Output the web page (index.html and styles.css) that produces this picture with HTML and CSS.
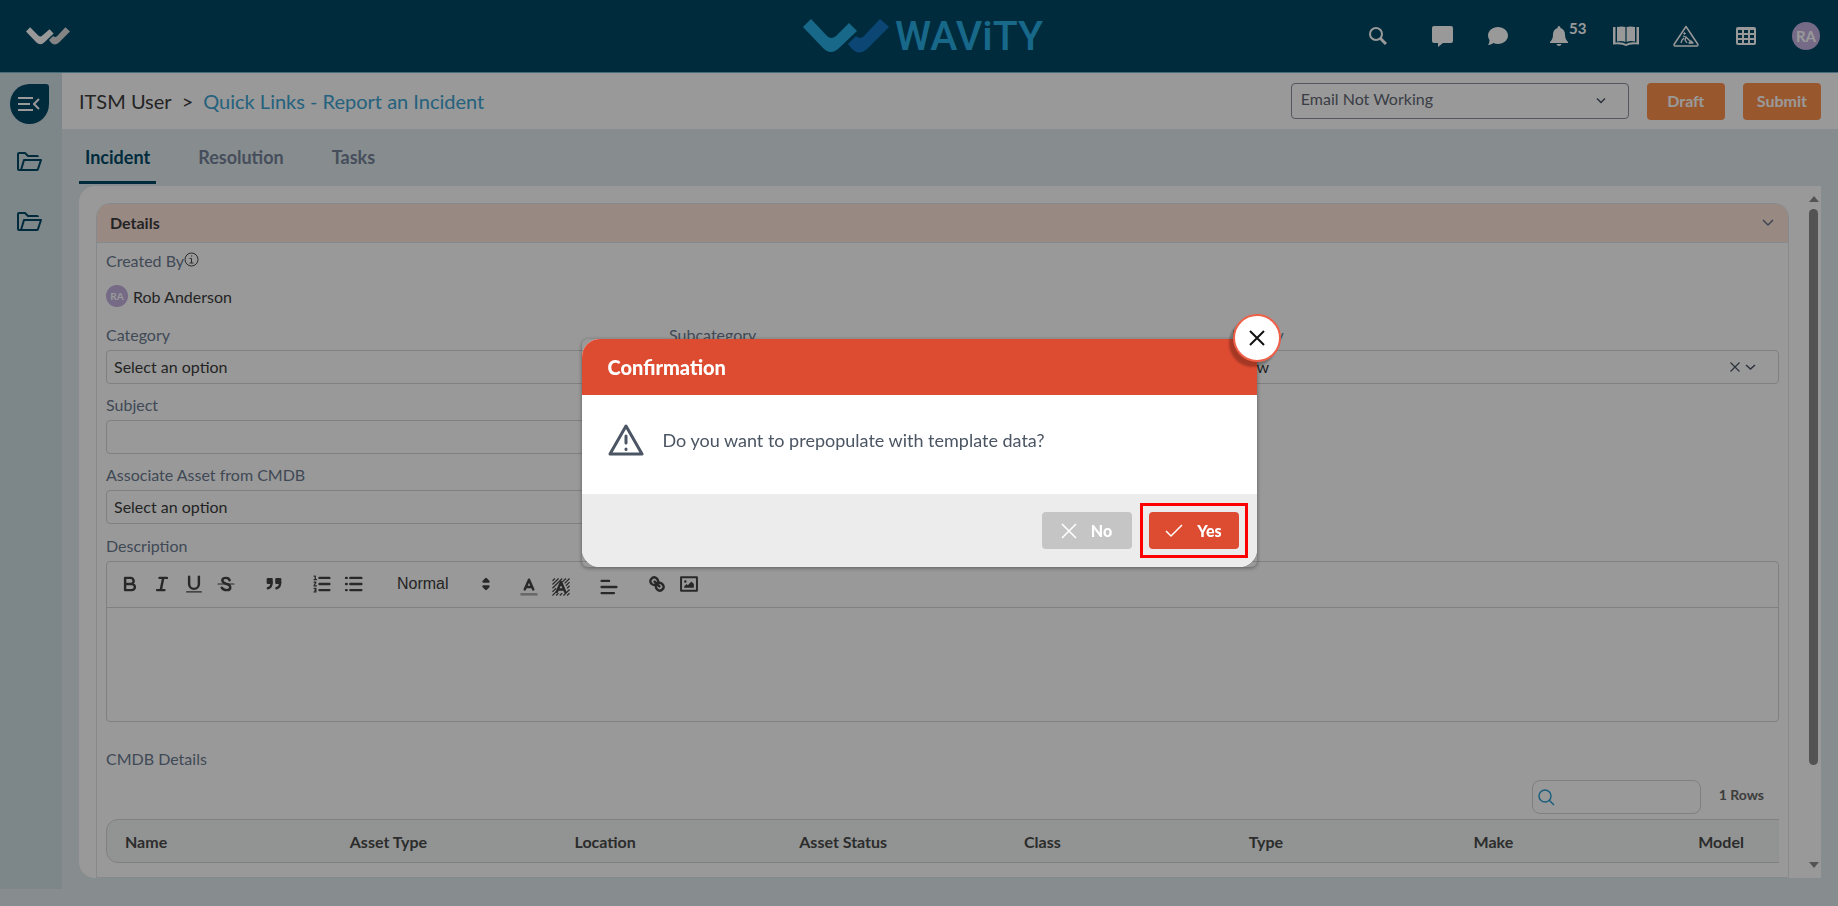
FILE: index.html
```html
<!DOCTYPE html>
<html lang="en">
<head>
    <meta charset="UTF-8">
    <meta name="viewport" content="width=device-width, initial-scale=1.0">
    <title>Wavity - Report an Incident</title>
    <link rel="stylesheet" href="styles.css">
</head>
<body>

    <header class="topbar">
        <a href="#" class="home" aria-label="Home">
            <svg width="44" height="18" viewBox="0 0 86 34">
                <path fill="#fff" d="M0 8L8 0L24 16Q28 20 32 16L46 4L54 12L36 29Q28 37 20 29Z"/>
                <path fill="#ddd" d="M45 25L53 17Q57 21 61 17L77 0L86 8L64 30Q56 37 49 30Z"/>
            </svg>
        </a>
        <div class="brand">
            <svg width="86" height="34" viewBox="0 0 86 34">
                <path fill="#28afe4" d="M0 8L8 0L24 17Q28 21 33 17L46 4L54 12L36 29Q28 37 20 29Z"/>
                <path fill="#1376c3" d="M45 25L53 17Q57 21 61 17L77 0L86 8L64 30Q56 37 49 30Z"/>
            </svg>
            <span>WAViTY</span>
        </div>
        <nav class="tools">
            <button class="tool tool-search" aria-label="Search">
                <svg width="18" height="18" viewBox="0 0 18 18" fill="none" stroke="#fff" stroke-width="2"><circle cx="7" cy="7" r="6"/><path d="M11 11L17 17" stroke-width="3"/></svg>
            </button>
            <div class="chats">
                <button class="tool" aria-label="Messages">
                    <svg width="21" height="21" viewBox="0 0 21 21" fill="#fff"><path d="M2 0H19Q21 0 21 2V15Q21 17 19 17H11L6 21V17H2Q0 17 0 15V2Q0 0 2 0Z"/></svg>
                </button>
                <button class="tool" aria-label="Chat">
                    <svg width="20" height="18" viewBox="0 0 20 18" fill="#fff"><path d="M10 0C15.500 0 20 4 20 8.500S15.500 17 10 17Q7.500 17 5.500 16Q3 18 0 18Q1.500 16 1.500 13Q0 11 0 8.500C0 4 4.500 0 10 0Z"/></svg>
                </button>
            </div>
            <button class="tool tool-bell" aria-label="Notifications">
                <svg width="18" height="20" viewBox="0 0 18 20" fill="#fff"><path d="M9 0Q10.500 0 10.500 2Q15 3.500 15 8.500Q15 13 18 16V17H0V16Q3 13 3 8.500Q3 3.500 7.500 2Q7.500 0 9 0ZM6.500 18H11.500Q11 20 9 20T6.500 18Z"/></svg>
                <span class="count">53</span>
            </button>
            <button class="tool" aria-label="Knowledge base">
                <svg width="26" height="20" viewBox="0 0 26 20" fill="#fff"><path d="M4 1Q9 0 12.400 1V16Q9 14.500 4 15.500ZM22 1Q17 0 13.600 1V16Q17 14.500 22 15.500Z"/><path d="M0 1H2.500V16.500Q9 15.500 13 18Q17 15.500 23.500 16.500V1H26V18.500Q17 17.500 13 20Q9 17.500 0 18.500Z"/></svg>
            </button>
            <button class="tool" aria-label="Incidents">
                <svg width="26" height="22" viewBox="0 0 26 22" fill="none" stroke="#fff" stroke-linejoin="round"><path stroke-width="1.500" d="M13 1.500L25 19.500Q25 21 24 21H2Q1 21 1 19.500Z"/><circle cx="11.500" cy="8.500" r=".8" fill="#fff"/><path d="M10 11L13 12L12 15L14 18M11 13L9 15L8 18M13 12L15 14L18 17M16 18L18 16L20 18Z" stroke-width="1.300"/></svg>
            </button>
            <button class="tool" aria-label="Apps">
                <svg width="20" height="18" viewBox="0 0 20 18"><rect width="20" height="18" rx="2" fill="#fff"/><path fill="#004967" d="M2 3h4v3H2zM8 3h4v3H8zM14 3h4v3h-4zM2 8h4v3H2zM8 8h4v3H8zM14 8h4v3h-4zM2 13h4v3H2zM8 13h4v3H8zM14 13h4v3h-4z"/></svg>
            </button>
            <button class="tool avatar">RA</button>
        </nav>
    </header>

    <div class="layout">
        <aside class="sidebar">
            <button class="toggle" aria-label="Collapse menu">
                <svg width="22" height="16" viewBox="0 0 22 16" fill="none" stroke="#fff" stroke-width="2"><path d="M0 2H15M0 8H12M0 14H15M21 3L16 8L21 13"/></svg>
            </button>
            <a href="#" aria-label="Folder">
                <svg width="25" height="19" viewBox="0 0 25 19" fill="none" stroke="#004967" stroke-width="2" stroke-linejoin="round"><path d="M4 18H2Q1 18 1 17V2Q1 1 2 1H8L11 4H20Q21 4 21 5M4 18L7 8H24L21 17Q21 18 20 18Z"/></svg>
            </a>
            <a href="#" aria-label="Folder">
                <svg width="25" height="19" viewBox="0 0 25 19" fill="none" stroke="#004967" stroke-width="2" stroke-linejoin="round"><path d="M4 18H2Q1 18 1 17V2Q1 1 2 1H8L11 4H20Q21 4 21 5M4 18L7 8H24L21 17Q21 18 20 18Z"/></svg>
            </a>
        </aside>

        <main class="main">
            <div class="titlebar">
                <div class="crumbs">
                    <span>ITSM User</span>
                    <span class="sep">&gt;</span>
                    <a href="#">Quick Links - Report an Incident</a>
                </div>
                <div class="select template">
                    <select aria-label="Template"><option>Email Not Working</option></select>
                    <svg width="10" height="7" viewBox="0 0 10 7" fill="none" stroke="#4b5563" stroke-width="1.500"><path d="M1 1L5 5L9 1"/></svg>
                </div>
                <button class="btn">Draft</button>
                <button class="btn">Submit</button>
            </div>

            <nav class="tabs">
                <a href="#" class="tab active">Incident</a>
                <a href="#" class="tab">Resolution</a>
                <a href="#" class="tab">Tasks</a>
            </nav>

            <div class="panel">
                <section class="card">
                    <div class="card-head">
                        <h2>Details</h2>
                        <svg width="12" height="8" viewBox="0 0 12 8" fill="none" stroke="#64748b" stroke-width="1.500"><path d="M1 1L6 6L11 1"/></svg>
                    </div>
                    <div class="card-body">
                        <div class="created">
                            <div class="label">Created By<svg width="15" height="15" viewBox="0 0 15 15" fill="none" stroke="#4a4a4a"><circle cx="7.500" cy="7.500" r="6.500"/><path d="M5.500 6.500H7.500V11M5.500 11H9.500M7 4H8.200"/></svg></div>
                            <div class="person"><span class="avatar small">RA</span>Rob Anderson</div>
                        </div>

                        <div class="fields">
                            <div class="field">
                                <label class="label" for="category">Category</label>
                                <div class="select">
                                    <select id="category"><option>Select an option</option></select>
                                    <svg width="10" height="7" viewBox="0 0 10 7" fill="none" stroke="#4b5563" stroke-width="1.500"><path d="M1 1L5 5L9 1"/></svg>
                                </div>
                            </div>
                            <div class="field">
                                <label class="label" for="subcategory">Subcategory</label>
                                <div class="select">
                                    <select id="subcategory"><option>Select an option</option></select>
                                    <svg width="10" height="7" viewBox="0 0 10 7" fill="none" stroke="#4b5563" stroke-width="1.500"><path d="M1 1L5 5L9 1"/></svg>
                                </div>
                            </div>
                            <div class="field">
                                <label class="label" for="priority">Priority</label>
                                <div class="select">
                                    <select id="priority"><option>Low</option></select>
                                    <svg width="26" height="10" viewBox="0 0 26 10" fill="none" stroke="#4b5563"><path stroke-width="1.200" d="M.5 .5L9.500 9.500M9.500 .5L.5 9.500"/><path stroke-width="1.500" d="M16 3L20.500 7L25 3"/></svg>
                                </div>
                            </div>
                            <div class="field field-row">
                                <label class="label" for="subject">Subject</label>
                                <input id="subject" type="text">
                            </div>
                            <div class="field field-row">
                                <label class="label" for="asset">Associate Asset from CMDB</label>
                                <div class="select">
                                    <select id="asset"><option>Select an option</option></select>
                                    <svg width="10" height="7" viewBox="0 0 10 7" fill="none" stroke="#4b5563" stroke-width="1.500"><path d="M1 1L5 5L9 1"/></svg>
                                </div>
                            </div>
                        </div>

                        <div class="field">
                            <label class="label" for="description">Description</label>
                            <div class="editor">
                                <div class="toolbar">
                                    <div class="group">
                                        <button aria-label="Bold"><svg viewBox="0 0 18 18"><path d="M5 4H9.500A2.500 2.500 0 0 1 12 6.500V6.500A2.500 2.500 0 0 1 9.500 9H5ZM5 9H10.500A2.500 2.500 0 0 1 13 11.500V11.500A2.500 2.500 0 0 1 10.500 14H5Z"/></svg></button>
                                        <button aria-label="Italic"><svg viewBox="0 0 18 18"><path d="M7 4H13M5 14H11M8 14L10 4"/></svg></button>
                                        <button aria-label="Underline"><svg viewBox="0 0 18 18"><path d="M5 3V9A4 4 0 0 0 9 13A4 4 0 0 0 13 9V3" /><path d="M3 15.500H15" stroke-width="1"/></svg></button>
                                        <button aria-label="Strike"><svg viewBox="0 0 18 18"><path d="M2.500 9H15.500" stroke-width="1"/><path d="M12 6Q11.500 4 9 4Q6 4 6 6Q6 8 9 8.800Q12.500 9.500 12.500 11.800Q12.500 14 9.500 14Q6.500 14 5.500 12"/></svg></button>
                                    </div>
                                    <div class="group">
                                        <button aria-label="Quote"><svg viewBox="0 0 18 18"><path class="solid" d="M4 5H7V8H4ZM11 5H14V8H11Z"/><path d="M7 8C7 10 6 12 4 12.500M14 8C14 10 13 12 11 12.500"/></svg></button>
                                    </div>
                                    <div class="group">
                                        <button aria-label="Numbered list"><svg viewBox="0 0 18 18"><path d="M7 4H15M7 9H15M7 14H15"/><path stroke-width="1" d="M2.500 2.500H3.500V5.500M2.500 5.500H4.500M2.500 7.500H4L2.500 10.500H4.500M2.500 12.500H4V14H3H4V15.500H2.500"/></svg></button>
                                        <button aria-label="Bullet list"><svg viewBox="0 0 18 18"><path d="M6 4H15M6 9H15M6 14H15M2.500 4H3M2.500 9H3M2.500 14H3"/></svg></button>
                                    </div>
                                    <div class="size">
                                        <select aria-label="Text size"><option>Normal</option></select>
                                        <svg viewBox="0 0 18 18"><path class="solid" d="M7 11L9 13L11 11ZM7 7L9 5L11 7Z"/></svg>
                                    </div>
                                    <div class="group low">
                                        <button aria-label="Text color"><svg viewBox="0 0 18 18"><path class="faint" d="M2 15H16"/><path d="M5.500 11L9 3L12.500 11M7 9H11"/></svg></button>
                                        <button aria-label="Background color"><svg viewBox="0 0 18 18"><path class="hatch" d="M2 4L4 2M2 7L7 2M2 10L10 2M2 13L5 10M10 5L13 2M2 16L6 12M12 6L16 2M5 16L7 14M13 8L16 5M8 16L10 14M14 10L16 8M11 16L16 11M14 16L16 14"/><path d="M5.500 13L9 5L12.500 13M7 11H11"/></svg></button>
                                    </div>
                                    <div class="group low">
                                        <button aria-label="Align"><svg viewBox="0 0 18 18"><path d="M3 9H15M3 14H13M3 4H9"/></svg></button>
                                    </div>
                                    <div class="group">
                                        <button aria-label="Link"><svg viewBox="0 0 18 18"><path d="M7 7L11 11M8.900 4.600C10.300 6 10.300 7.900 8.900 8.900C7.800 10 6 10 4.600 8.900C3.200 7.500 3.200 5.700 4.600 4.600C5.700 3.200 7.500 3.200 8.900 4.600ZM13.400 9.100C14.800 10.500 14.800 12.300 13.400 13.400C12.300 14.800 10.500 14.800 9.100 13.400C7.700 12 7.700 10.200 9.100 9.100C10.200 7.700 12 7.700 13.400 9.100Z"/></svg></button>
                                        <button aria-label="Image"><svg viewBox="0 0 18 18"><path stroke-width="1.600" d="M2.500 3.500H15.500V14.500H2.500Z"/><path class="solid" stroke="none" d="M5 12V11L7 9L8 10L11 7L13 9V12Z"/><circle class="solid" stroke="none" cx="6" cy="7" r="1"/></svg></button>
                                    </div>
                                </div>
                                <textarea id="description"></textarea>
                            </div>
                        </div>

                        <div class="cmdb">
                            <div class="label">CMDB Details</div>
                            <div class="cmdb-tools">
                                <div class="search">
                                    <svg width="17" height="17" viewBox="0 0 17 17" fill="none" stroke="#2f9fd0" stroke-width="1.500"><circle cx="7" cy="7" r="6"/><path d="M11 11L16 16"/></svg>
                                    <input type="text" aria-label="Search assets">
                                </div>
                                <span class="rows">1 Rows</span>
                            </div>
                            <div class="table-wrap">
                                <table>
                                    <thead>
                                        <tr>
                                            <th>Name</th>
                                            <th>Asset Type</th>
                                            <th>Location</th>
                                            <th>Asset Status</th>
                                            <th>Class</th>
                                            <th>Type</th>
                                            <th>Make</th>
                                            <th>Model</th>
                                        </tr>
                                    </thead>
                                </table>
                            </div>
                        </div>
                    </div>
                </section>
                <div class="scrollbar">
                    <svg width="10" height="6" viewBox="0 0 10 6"><path d="M0 6L5 0L10 6Z"/></svg>
                    <div class="track"><div class="thumb"></div></div>
                    <svg width="10" height="6" viewBox="0 0 10 6"><path d="M0 0L5 6L10 0Z"/></svg>
                </div>
            </div>
        </main>
    </div>

    <div class="overlay">
        <div class="modal" role="dialog" aria-labelledby="modal-title">
            <div class="modal-box">
                <h2 id="modal-title">Confirmation</h2>
                <div class="modal-body">
                    <svg width="36" height="32" viewBox="0 0 36 32" fill="none" stroke="#4b5563" stroke-width="3" stroke-linejoin="round" stroke-linecap="round"><path d="M18 2L34 30H2Z"/><path d="M18 12V19M18 25V25.500"/></svg>
                    <p>Do you want to prepopulate with template data?</p>
                </div>
                <div class="modal-foot">
                    <button class="answer no">
                        <svg width="16" height="16" viewBox="0 0 16 16" fill="none" stroke="#fff" stroke-width="1.500"><path d="M1 1L15 15M15 1L1 15"/></svg>No
                    </button>
                    <div class="marked">
                        <button class="answer yes">
                            <svg width="18" height="14" viewBox="0 0 18 14" fill="none" stroke="#fff" stroke-width="1.500"><path d="M1 7L6 12L17 1"/></svg>Yes
                        </button>
                    </div>
                </div>
            </div>
            <button class="close" aria-label="Close">
                <svg width="16" height="16" viewBox="0 0 16 16" fill="none" stroke="#111" stroke-width="2"><path d="M1 1L15 15M15 1L1 15"/></svg>
            </button>
        </div>
    </div>

</body>
</html>
```
FILE: styles.css
```css
* {
    box-sizing: border-box;
}
body {
    font-family: Lato, "Liberation Sans", sans-serif;
    font-size: 16px;
    line-height: 24px;
    color: #3c3c3c;
    background-color: #e1ebee;
    margin: 0;
    height: 100vh;
    display: flex;
    flex-direction: column;
    overflow: hidden;
}
button, input, select, textarea {
    font: inherit;
    color: inherit;
}
button {
    border: none;
    background: none;
    padding: 0;
    cursor: pointer;
}
a {
    text-decoration: none;
}
svg {
    flex-shrink: 0;
}

/* top bar */
.topbar {
    height: 73px;
    flex-shrink: 0;
    display: grid;
    grid-template-columns: 1fr auto 1fr;
    align-items: center;
    padding: 0 18px 0 26px;
    background-color: #004967;
    border-bottom: 1px solid #75b5cc;
}
.home svg {
    display: block;
}
.brand {
    display: flex;
    align-items: center;
    gap: 6px;
    font-family: Roboto, sans-serif;
    font-weight: 500;
    font-size: 41px;
    line-height: 42px;
    color: #28afe4;
}
.tools {
    display: flex;
    justify-content: flex-end;
    align-items: center;
    gap: 32px;
}
.chats {
    display: flex;
    gap: 28px;
}
.tool {
    width: 28px;
    height: 28px;
    display: flex;
    justify-content: center;
    align-items: center;
}
.tool-search {
    margin-right: 4px;
}
.tool-bell {
    width: 36px;
    justify-content: flex-start;
    padding-left: 6px;
    position: relative;
}
.count {
    position: absolute;
    left: 25px;
    top: -6px;
    font-size: 15px;
    line-height: 24px;
    font-weight: bold;
    color: #fff;
}
.avatar {
    width: 28px;
    height: 28px;
    border-radius: 50%;
    background-color: #c3b2e1;
    color: #fff;
    font-size: 15px;
    font-weight: bold;
}
.avatar.small {
    width: 22px;
    height: 22px;
    line-height: 22px;
    font-size: 10px;
    text-align: center;
}

/* side bar */
.layout {
    flex: 1;
    min-height: 0;
    display: flex;
}
.sidebar {
    width: 62px;
    flex-shrink: 0;
    margin-bottom: 17px;
    padding: 11px 13px 0 9px;
    display: flex;
    flex-direction: column;
    align-items: center;
    gap: 28px;
    background-color: #d0dfe3;
}
.sidebar a {
    height: 32px;
}
.sidebar a svg {
    display: block;
}
.toggle {
    width: 39px;
    height: 40px;
    display: flex;
    justify-content: center;
    align-items: center;
    border-radius: 50% 3px 50% 50%;
    background-color: #004967;
}

/* title and tabs */
.main {
    flex: 1;
    min-width: 0;
    display: flex;
    flex-direction: column;
    padding-bottom: 28px;
}
.titlebar {
    height: 56px;
    flex-shrink: 0;
    display: flex;
    align-items: center;
    gap: 18px;
    padding: 0 17px;
    background-color: #fff;
}
.crumbs {
    flex: 1;
    display: flex;
    gap: 10px;
    font-size: 20px;
}
.crumbs a {
    color: #3da3d2;
}
.btn {
    height: 37px;
    min-width: 78px;
    padding: 0 14px;
    border-radius: 4px;
    background-color: #ff914e;
    color: #fff;
    font-weight: bold;
}
.tabs {
    height: 57px;
    flex-shrink: 0;
    display: flex;
    gap: 36px;
    padding: 0 17px;
    font-size: 18px;
    font-weight: bold;
}
.tab {
    height: 55px;
    padding: 16px 6px 0;
    color: #75829a;
    border-bottom: 3px solid transparent;
}
.tab.active {
    color: #004967;
    border-color: #004967;
}

/* panel */
.panel {
    flex: 1;
    min-height: 0;
    display: flex;
    margin: 0 17px;
    padding: 17px 0 0 17px;
    border-radius: 16px 0 0 16px;
    background-color: #fff;
    overflow: hidden;
}
.card {
    flex: 1;
    min-width: 0;
    margin-right: 17px;
    border: 1px solid #e1e6ea;
    border-radius: 14px 14px 0 0;
}
.card-head {
    height: 39px;
    display: flex;
    justify-content: space-between;
    align-items: center;
    padding: 0 14px 0 13px;
    border-bottom: 1px solid #e1e6ea;
    border-radius: 13px 13px 0 0;
    background-color: #ffe4da;
}
.card-head h2 {
    margin: 0;
    font-size: 16px;
}
.card-body {
    padding: 6px 9px;
}
.label {
    display: block;
    color: #6b7a90;
}
.created {
    height: 74px;
}
.created .label {
    display: flex;
    margin-bottom: 12px;
}
.created .label svg {
    margin-top: 3px;
}
.person {
    display: flex;
    gap: 5px;
}
.fields {
    display: grid;
    grid-template-columns: repeat(3, 1fr);
    gap: 9px 16px;
    margin-bottom: 10px;
}
.field {
    display: flex;
    flex-direction: column;
    gap: 3px;
}
.field-row {
    grid-column: 1 / 2;
}
.fields .field-row + .field-row {
    grid-row: 3;
}
.select {
    position: relative;
}
.select select, .field input {
    width: 100%;
    height: 34px;
    padding: 0 7px;
    border: 1px solid #d5d5d5;
    border-radius: 4px;
    background-color: #fff;
    appearance: none;
}
.select select {
    display: block;
}
.select svg {
    position: absolute;
    right: 23px;
    top: 0;
    height: 100%;
    pointer-events: none;
}
.template {
    width: 338px;
}
.template select {
    height: 36px;
    padding: 0 9px 5px;
    border-color: #8b8f9a;
    color: #5f6875;
}

/* description editor */
.editor {
    border: 1px solid #d5d5d5;
    border-radius: 4px;
}
.toolbar {
    height: 46px;
    display: flex;
    gap: 16px;
    padding: 7px;
    border-bottom: 1px solid #d5d5d5;
}
.group {
    display: flex;
}
.group.low {
    padding-top: 3px;
}
.group button {
    width: 32px;
    height: 30px;
}
.toolbar svg {
    display: block;
    width: 22px;
    height: 22px;
    margin: 0 auto;
    fill: none;
    stroke: #444;
    stroke-width: 2;
    stroke-linecap: round;
    stroke-linejoin: round;
}
.toolbar .solid {
    fill: #444;
}
.toolbar .faint {
    stroke: #aaa;
    stroke-linecap: butt;
}
.toolbar .hatch {
    stroke-width: 1;
    stroke-linecap: butt;
}
.size {
    width: 111px;
    height: 30px;
    display: flex;
    align-items: center;
}
.size select {
    flex: 1;
    padding: 0 0 0 11px;
    border: none;
    background: none;
    appearance: none;
    font-family: "Liberation Sans", Arial, sans-serif;
}
.editor textarea {
    display: block;
    width: 100%;
    height: 113px;
    border: none;
    background: none;
    resize: none;
}

/* asset table */
.cmdb {
    padding-top: 25px;
}
.cmdb-tools {
    display: flex;
    justify-content: flex-end;
    gap: 18px;
    padding: 9px 15px 5px 0;
}
.search {
    width: 169px;
    height: 34px;
    display: flex;
    align-items: center;
    padding: 0 5px;
    border: 1px solid #d5d5d5;
    border-radius: 8px;
}
.search input {
    flex: 1;
    min-width: 0;
    border: none;
    background: none;
}
.rows {
    padding-top: 3px;
    font-size: 14px;
    font-weight: bold;
    color: #666;
}
.table-wrap {
    overflow: hidden;
}
table {
    width: 1800px;
    table-layout: fixed;
    border-collapse: separate;
    border-spacing: 0;
    border: 1px solid #d5d5d5;
    border-radius: 12px;
    background-color: #f2f7f4;
}
th {
    height: 42px;
    padding: 2px 18px 0;
    text-align: left;
    color: #4a4a4a;
}

/* scroll bar */
.scrollbar {
    width: 15px;
    margin-top: -7px;
    padding-bottom: 10px;
    display: flex;
    flex-direction: column;
    align-items: center;
    gap: 7px;
    fill: #8a8a8a;
}
.track {
    flex: 1;
    width: 9px;
}
.thumb {
    height: 86%;
    border-radius: 5px;
    background-color: #8a8a8a;
}

/* confirmation */
.overlay {
    position: fixed;
    inset: 0;
    display: grid;
    place-items: center;
    background-color: rgba(0, 0, 0, 0.4);
}
.modal {
    position: relative;
    width: 675px;
    max-width: 90%;
    border-radius: 6px;
    box-shadow: 0 1px 4px rgba(0, 0, 0, 0.4);
}
.modal-box {
    border-radius: 18px;
    overflow: hidden;
    background-color: #fff;
}
.modal-box h2 {
    margin: 0;
    padding: 16px 26px;
    font-size: 20px;
    font-weight: 900;
    line-height: 24px;
    color: #fff;
    background-color: #dd4b31;
}
.modal-body {
    display: flex;
    gap: 19px;
    padding: 29px 26px 38px;
}
.modal-body p {
    margin: 0;
    font-size: 18px;
    line-height: 32px;
    color: #4b5563;
}
.modal-foot {
    display: flex;
    justify-content: flex-end;
    gap: 17px;
    padding: 18px;
    background-color: #ececec;
}
.answer {
    width: 90px;
    height: 37px;
    display: flex;
    justify-content: center;
    align-items: center;
    gap: 14px;
    border-radius: 4px;
    color: #fff;
    font-weight: 900;
}
.no {
    background-color: #c5c5c5;
}
.yes {
    background-color: #dd4b31;
}
.marked {
    outline: 3px solid #f00;
    outline-offset: 6px;
}
.close {
    position: absolute;
    top: -25px;
    right: -24px;
    width: 48px;
    height: 48px;
    display: flex;
    justify-content: center;
    align-items: center;
    border: 2px solid #ee6048;
    border-radius: 50%;
    background-color: #fff;
    box-shadow: -4px 5px 2px rgba(0, 0, 0, 0.25);
}
```
